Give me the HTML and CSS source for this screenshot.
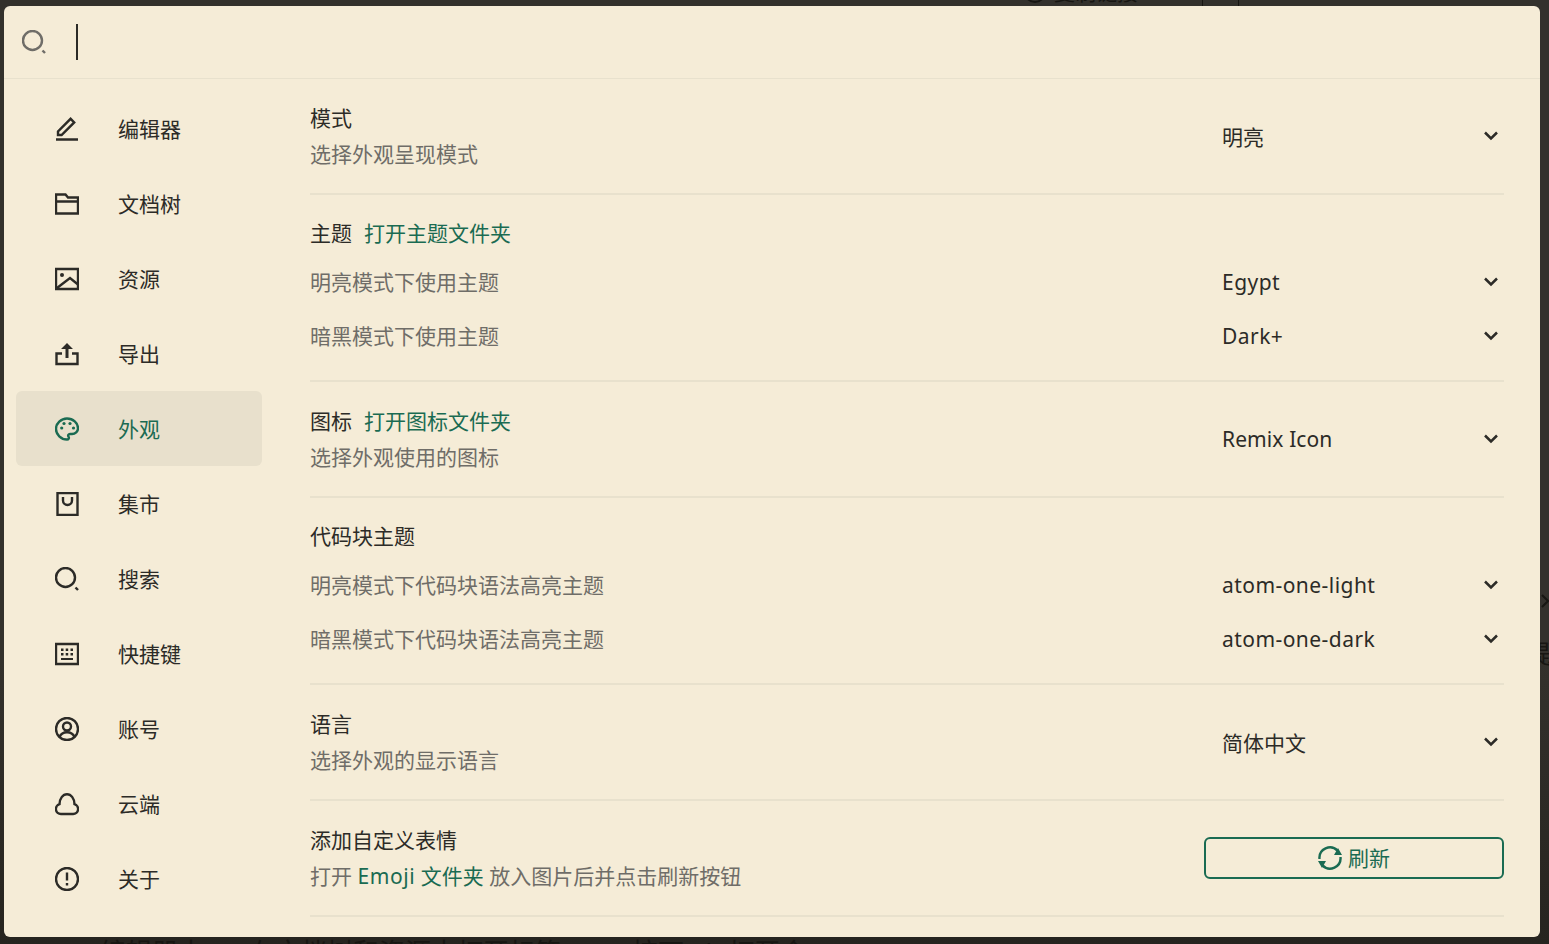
FILE: index.html
```html
<!DOCTYPE html>
<html lang="zh-CN">
<head>
  <meta charset="UTF-8">
  <title>偏好设置</title>
  <link rel="stylesheet" href="styles.css">
</head>
<body>
  <!-- page behind the dialog, only its edges show -->
  <div class="backdrop">
    <div class="ghost-top"><span class="ghost-dot"></span><span>复制链接</span></div>
    <span class="ghost-bar ghost-bar-a"></span>
    <span class="ghost-bar ghost-bar-b"></span>
    <div class="ghost-bottom"><span>编辑器中</span><span>在文档树和资源中打开标签，</span><span>按下 alt 打开合</span></div>
    <svg class="ghost-chevron" viewBox="0 0 10 14"><path d="m1 1 6 6-6 6"/></svg>
    <div class="ghost-side">题</div>
  </div>

  <div class="dialog">
    <div class="search-bar">
      <svg class="icon search-icon" viewBox="0 0 24 24"><circle cx="10.5" cy="10.5" r="9.500"/><path d="M20.500 20.500 23 23"/></svg>
      <span class="caret"></span>
    </div>

    <div class="dialog-body">
      <div class="sidebar">
        <div class="nav-item">
          <svg class="icon" viewBox="0 0 24 24"><path d="M3 18v-3.600L15.600 1.800l3.600 3.600L6.600 18z"/><path d="M1 22.500h22"/></svg>
          <span>编辑器</span>
        </div>
        <div class="nav-item">
          <svg class="icon" viewBox="0 0 24 24"><path d="M1 2.500h9.500l2.500 3h10v16H1z"/><path d="M1 9.500h22"/></svg>
          <span>文档树</span>
        </div>
        <div class="nav-item">
          <svg class="icon" viewBox="0 0 24 24"><path d="M1 2h22v20H1z"/><circle class="solid" cx="7" cy="8" r="2"/><path d="M2 21 15 11l8 6.500"/></svg>
          <span>资源</span>
        </div>
        <div class="nav-item">
          <svg class="icon" viewBox="0 0 24 24"><path class="solid" d="M12 1 6 7h4.500v9h3V7H18z"/><path d="M7 11.500H1.500V22h21V11.500H17"/></svg>
          <span>导出</span>
        </div>
        <div class="nav-item active">
          <svg class="icon" viewBox="0 0 24 24"><path d="M12 1.500c6 0 11 4.300 11 9.700 0 3.400-2.800 5.800-6 5.800h-2c-1.600 0-2.300 1.500-1.500 2.600 1 1.400 0 2.900-1.500 2.900C6 22.500 1 17.500 1 12S6 1.500 12 1.500z"/><circle class="solid" cx="6.700" cy="11" r="1.600"/><circle class="solid" cx="9" cy="6.500" r="1.600"/><circle class="solid" cx="15" cy="6.500" r="1.600"/><circle class="solid" cx="18.500" cy="11" r="1.600"/></svg>
          <span>外观</span>
        </div>
        <div class="nav-item">
          <svg class="icon" viewBox="0 0 24 24"><path d="M2.500 1h20v22h-20z"/><path d="M8 5v3.500a4.500 4.500 0 0 0 9 0V5"/></svg>
          <span>集市</span>
        </div>
        <div class="nav-item">
          <svg class="icon" viewBox="0 0 24 24"><circle cx="10.500" cy="10.500" r="9.500"/><path d="M20.500 20.500 23 23"/></svg>
          <span>搜索</span>
        </div>
        <div class="nav-item">
          <svg class="icon" viewBox="0 0 24 24"><path d="M1 2h22v20H1z"/><path class="solid" d="M6 6.500h2.500V9H6zM10.700 6.500h2.500V9h-2.500zM15.500 6.500H18V9h-2.500zM6 11h2.500v2.500H6zM10.700 11h2.500v2.500h-2.500zM15.500 11H18v2.500h-2.500zM6 16h12v2H6z"/></svg>
          <span>快捷键</span>
        </div>
        <div class="nav-item">
          <svg class="icon" viewBox="0 0 24 24"><circle cx="12" cy="12" r="11"/><circle cx="12" cy="9.500" r="4"/><path d="M4.500 20c1.500-3.500 4.300-4.800 7.500-4.800s6 1.300 7.500 4.800"/></svg>
          <span>账号</span>
        </div>
        <div class="nav-item">
          <svg class="icon" viewBox="0 0 24 24"><path d="M6 22h12a5 5 0 0 0 1.500-9.800A7.500 10 0 0 0 4.500 12.200 5 5 0 0 0 6 22z"/></svg>
          <span>云端</span>
        </div>
        <div class="nav-item">
          <svg class="icon" viewBox="0 0 24 24"><circle cx="12" cy="12" r="11"/><path d="M12 5.500v8"/><path d="M12 16v2.500"/></svg>
          <span>关于</span>
        </div>
      </div>

      <div class="content">
        <div class="row">
          <div class="row-text">
            <div class="title">模式</div>
            <div class="desc">选择外观呈现模式</div>
          </div>
          <div class="select">
            <span>明亮</span>
            <svg class="icon chevron" viewBox="0 0 24 24"><path d="m6 8.500 6 6 6-6"/></svg>
          </div>
        </div>

        <div class="group">
          <div class="title group-title">主题<span class="link">打开主题文件夹</span></div>
          <div class="sub-row">
            <div class="desc">明亮模式下使用主题</div>
            <div class="select">
              <span class="latin">Egypt</span>
              <svg class="icon chevron" viewBox="0 0 24 24"><path d="m6 8.500 6 6 6-6"/></svg>
            </div>
          </div>
          <div class="sub-row">
            <div class="desc">暗黑模式下使用主题</div>
            <div class="select">
              <span class="latin">Dark+</span>
              <svg class="icon chevron" viewBox="0 0 24 24"><path d="m6 8.500 6 6 6-6"/></svg>
            </div>
          </div>
        </div>

        <div class="row">
          <div class="row-text">
            <div class="title">图标<span class="link">打开图标文件夹</span></div>
            <div class="desc">选择外观使用的图标</div>
          </div>
          <div class="select">
            <span class="remix">Remix Icon</span>
            <svg class="icon chevron" viewBox="0 0 24 24"><path d="m6 8.500 6 6 6-6"/></svg>
          </div>
        </div>

        <div class="group">
          <div class="title group-title">代码块主题</div>
          <div class="sub-row">
            <div class="desc">明亮模式下代码块语法高亮主题</div>
            <div class="select">
              <span class="latin">atom-one-light</span>
              <svg class="icon chevron" viewBox="0 0 24 24"><path d="m6 8.500 6 6 6-6"/></svg>
            </div>
          </div>
          <div class="sub-row">
            <div class="desc">暗黑模式下代码块语法高亮主题</div>
            <div class="select">
              <span class="latin">atom-one-dark</span>
              <svg class="icon chevron" viewBox="0 0 24 24"><path d="m6 8.500 6 6 6-6"/></svg>
            </div>
          </div>
        </div>

        <div class="row">
          <div class="row-text">
            <div class="title">语言</div>
            <div class="desc">选择外观的显示语言</div>
          </div>
          <div class="select">
            <span>简体中文</span>
            <svg class="icon chevron" viewBox="0 0 24 24"><path d="m6 8.500 6 6 6-6"/></svg>
          </div>
        </div>

        <div class="row">
          <div class="row-text">
            <div class="title">添加自定义表情</div>
            <div class="desc">打开 <span class="link-plain"><span class="emoji">Emoji</span> 文件夹</span> 放入图片后并点击刷新按钮</div>
          </div>
          <button class="refresh">
            <svg class="icon" viewBox="0 0 24 24"><path d="M1.500 13A10.500 10.500 0 0 1 19.500 4.700"/><path d="M22.500 11A10.500 10.500 0 0 1 4.500 19.300"/><path class="solid" d="M16 9h8l-4-7zM8 15H0l4 7z"/></svg>
            <span class="refresh-label">刷新</span>
          </button>
        </div>
      </div>
    </div>
  </div>
</body>
</html>
```

FILE: styles.css
```css
:root {
  --paper: #f5ecd7;
  --ink: #2c2b27;
  --muted: #6f6d68;
  --green: #1a6b52;
  --line: #e8e1cd;
}
html, body {
  height: 100%;
}
body {
  margin: 0;
  padding: 6px 9px 7px 4px;
  box-sizing: border-box;
  overflow: hidden;
  background: linear-gradient(#33312c 0%, #33312c 70%, #26241f 100%);
  font-family: "Noto Sans", "Noto Sans CJK SC", sans-serif;
  font-size: 21px;
  color: var(--ink);
}

/* backdrop */
.backdrop {
  position: absolute;
  inset: 0;
  overflow: hidden;
  color: #171612;
  font-size: 26px;
  line-height: 36px;
}
.ghost-top {
  position: absolute;
  top: -26px;
  left: 1024px;
  display: flex;
  align-items: center;
  gap: 8px;
  font-size: 21px;
}
.ghost-dot {
  width: 18px;
  height: 18px;
  border: 2px solid #171612;
  border-radius: 50%;
}
.ghost-bar {
  position: absolute;
  top: 0;
  width: 1px;
  height: 6px;
  background: #171612;
}
.ghost-bar-a { left: 1202px; }
.ghost-bar-b { left: 1238px; }
.ghost-bottom {
  position: absolute;
  top: 934px;
  left: 100px;
  display: flex;
  gap: 45px;
  white-space: nowrap;
}
.ghost-chevron {
  position: absolute;
  top: 594px;
  left: 1541px;
  width: 10px;
  height: 14px;
  fill: none;
  stroke: #171612;
  stroke-width: 2;
}
.ghost-side {
  position: absolute;
  top: 636px;
  left: 1536px;
}

/* dialog */
.dialog {
  position: relative;
  height: 100%;
  display: flex;
  flex-direction: column;
  background: var(--paper);
  border-radius: 6px;
  overflow: hidden;
}
.search-bar {
  flex: none;
  height: 72px;
  display: flex;
  align-items: center;
  padding-left: 18px;
  border-bottom: 1px solid var(--line);
}
.search-icon {
  color: var(--muted);
}
.caret {
  width: 2px;
  height: 36px;
  margin-left: 30px;
  background: var(--ink);
}
.dialog-body {
  flex: 1;
  display: flex;
  min-height: 0;
}

/* icons */
.icon {
  flex: none;
  width: 24px;
  height: 24px;
  fill: none;
  stroke: currentColor;
  stroke-width: 2.400;
}
.icon .solid {
  fill: currentColor;
  stroke: none;
}

/* sidebar */
.sidebar {
  flex: none;
  width: 246px;
  padding: 12px 0 0 12px;
}
.nav-item {
  height: 75px;
  display: flex;
  align-items: center;
  gap: 39px;
  padding-left: 39px;
  border-radius: 6px;
}
.nav-item span {
  margin-bottom: 2px;
}
.nav-item.active {
  background: #e8e0cc;
  color: var(--green);
}

/* settings */
.content {
  flex: 1;
  min-width: 0;
  margin: 0 36px 0 48px;
}
.row {
  display: flex;
  align-items: center;
  justify-content: space-between;
  padding: 21px 0;
  border-bottom: 2px solid var(--line);
}
.row-text {
  line-height: 36px;
}
.title {
  color: var(--ink);
  line-height: 36px;
}
.desc {
  color: var(--muted);
  line-height: 36px;
}
.link {
  margin-left: 12px;
  color: var(--green);
}
.link-plain {
  color: var(--green);
}
.emoji {
  letter-spacing: 0.6px;
}
.group {
  padding: 20px 0 17px;
  border-bottom: 2px solid var(--line);
}
.group-title {
  margin-bottom: 4px;
}
.sub-row {
  height: 54px;
  display: flex;
  align-items: center;
  justify-content: space-between;
}
.select {
  width: 300px;
  box-sizing: border-box;
  display: flex;
  align-items: center;
  justify-content: space-between;
  padding: 0 1px 0 18px;
  color: var(--ink);
}
.latin {
  letter-spacing: 0.45px;
}
.remix {
  letter-spacing: 0.1px;
}
.chevron {
  stroke-width: 2.500;
  margin-top: -1px;
}
.refresh {
  width: 300px;
  height: 42px;
  display: flex;
  align-items: center;
  justify-content: center;
  gap: 6px;
  padding: 0;
  background: transparent;
  border: 2px solid var(--green);
  border-radius: 6px;
  color: var(--green);
  font: inherit;
}
.refresh-label {
  margin-bottom: 2px;
}
```
